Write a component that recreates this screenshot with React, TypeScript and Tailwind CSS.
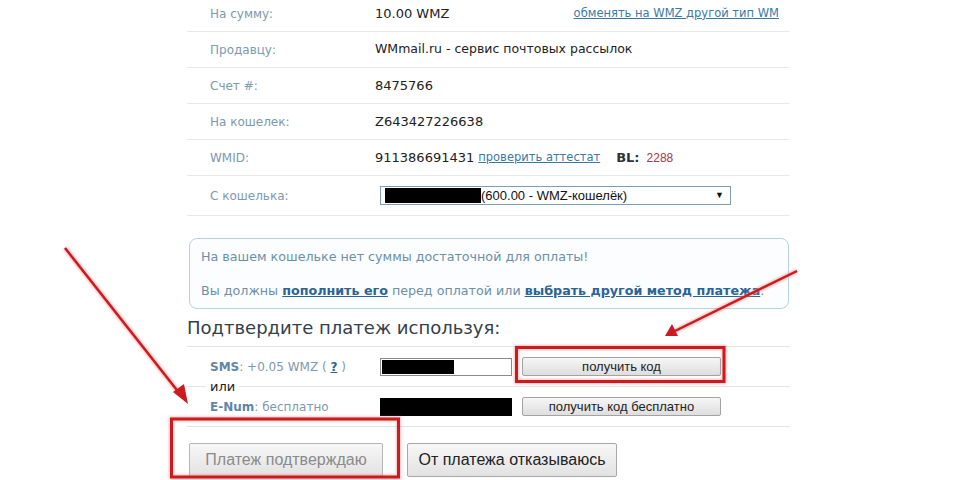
import React from 'react';

const Row = ({ label, children, tall }: { label: string; children: React.ReactNode; tall?: boolean }) => (
  <div className={`flex items-center border-b border-[#e8e8e8] ${tall ? 'h-[40px]' : 'h-[36px]'}`}>
    <div className="w-[188px] pl-[23px] text-[12px] text-[#7e98ae]">{label}</div>
    <div className="flex flex-1 items-center text-[#222]">{children}</div>
  </div>
);

const SmallButton = ({ children }: { children: React.ReactNode }) => (
  <button className="h-[19px] w-[199px] rounded-[2px] border border-[#a3a3a3] bg-gradient-to-b from-[#f6f6f6] to-[#dedede] font-['Liberation_Sans',Arial,sans-serif] text-[13px] leading-none text-[#222]">
    {children}
  </button>
);

export default function App() {
  return (
    <div className="relative h-[480px] w-[960px] overflow-hidden bg-white font-['DejaVu_Sans',Verdana,sans-serif] text-[13px]">
      <div className="ml-[187px] mt-[-4px] w-[603px]">
        <Row label="На сумму:">
          <span>10.00 WMZ</span>
          <a className="ml-auto mr-[11px] text-[11.5px] text-[#3a7aa8] underline">обменять на WMZ другой тип WM</a>
        </Row>
        <Row label="Продавцу:">
          <span className="text-[12.5px]">WMmail.ru - сервис почтовых рассылок</span>
        </Row>
        <Row label="Счет #:">8475766</Row>
        <Row label="На кошелек:">Z643427226638</Row>
        <Row label="WMID:">
          <span>911386691431</span>
          <a className="ml-[4px] text-[11.5px] text-[#3a7aa8] underline">проверить аттестат</a>
          <span className="ml-[16px] font-bold text-[#333]">BL:</span>
          <span className="ml-[7px] font-['Liberation_Sans',Arial,sans-serif] text-[12px] text-[#a3324c]">2288</span>
        </Row>
        <Row label="С кошелька:" tall>
          <div className="ml-[5px] flex h-[19px] w-[351px] items-center border border-[#7f9db9] bg-white pl-[4px] pr-[6px] font-['Liberation_Sans',Arial,sans-serif] text-[13px] text-[#111]">
            <span className="h-[15px] w-[96px] bg-black" />
            <span>(600.00 - WMZ-кошелёк)</span>
            <span className="ml-auto text-[9px]">▼</span>
          </div>
        </Row>
      </div>

      <div className="ml-[189px] mt-[22px] w-[600px] rounded-[8px] border border-[#b3d3e3] bg-[#fbfdfe] px-[11px] pt-[8px] text-[12.7px] text-[#6b8fa8]">
        <p className="leading-[20px]">На вашем кошельке нет суммы достаточной для оплаты!</p>
        <p className="mt-[14px] pb-[7px] leading-[20px]">
          Вы должны <a className="font-bold text-[#2a6496] underline">пополнить его</a> перед оплатой или{' '}
          <a className="font-bold text-[#2a6496] underline">выбрать другой метод платежа</a>.
        </p>
      </div>

      <div className="ml-[187px] w-[603px]">
        <h2 className="h-[37px] pt-[7px] text-[18px] leading-[24px] text-[#34404b]">Подтвердите платеж используя:</h2>
        <div className="relative border-t border-[#e3e3e3]">
          <div className="flex h-[40px] items-center border-b border-[#e3e3e3]">
            <div className="w-[193px] pl-[23px] text-[12px] text-[#7e98ae]">
              <span className="font-bold text-[#5f86a8]">SMS</span>: +0.05 WMZ ({' '}
              <span className="font-bold text-[#2a6496] underline">?</span> )
            </div>
            <div className="flex h-[18px] w-[132px] border border-[#8a8a8a] bg-white p-[1px]">
              <span className="h-full w-[72px] bg-black" />
            </div>
            <div className="ml-[10px]">
              <SmallButton>получить код</SmallButton>
            </div>
          </div>
          <span className="absolute left-[19px] top-[32px] bg-white px-[4px] leading-[16px] text-[#222]">или</span>
          <div className="flex h-[40px] items-center border-b border-[#e3e3e3]">
            <div className="w-[193px] pl-[23px] text-[12px] text-[#7e98ae]">
              <span className="font-bold text-[#5f86a8]">E-Num</span>: бесплатно
            </div>
            <div className="h-[18px] w-[132px] bg-black" />
            <div className="ml-[10px]">
              <SmallButton>получить код бесплатно</SmallButton>
            </div>
          </div>
        </div>
        <div className="ml-[2px] mt-[16px] flex gap-[24px] font-['Liberation_Sans',Arial,sans-serif] text-[16px]">
          <button className="h-[34px] w-[194px] rounded-[2px] border border-[#b5b5b5] bg-gradient-to-b from-[#f7f7f7] to-[#e2e2e2] text-[#8a8a8a]">
            Платеж подтверждаю
          </button>
          <button className="h-[34px] w-[210px] rounded-[2px] border border-[#a8a8a8] bg-gradient-to-b from-[#f7f7f7] to-[#e2e2e2] text-[#222]">
            От платежа отказываюсь
          </button>
        </div>
      </div>

      <svg className="pointer-events-none absolute inset-0" width="960" height="480" viewBox="0 0 960 480">
        <defs>
          <filter id="glow" x="-20%" y="-20%" width="140%" height="140%">
            <feGaussianBlur stdDeviation="1.2" />
          </filter>
        </defs>
        <g stroke="#f08080" strokeWidth="5" fill="none" opacity="0.5" filter="url(#glow)">
          <rect x="516.5" y="347.5" width="207.5" height="34" />
          <rect x="171.5" y="419" width="227" height="58" />
          <line x1="65" y1="248" x2="180" y2="394" />
          <line x1="797" y1="271" x2="675" y2="331" />
        </g>
        <g stroke="#cc1b1f" strokeWidth="3" fill="none">
          <rect x="516.5" y="347.5" width="207.5" height="34" />
          <rect x="171.5" y="419" width="227" height="58" />
          <line x1="65" y1="248" x2="180" y2="394" strokeWidth="2.5" />
          <line x1="797" y1="271" x2="675" y2="331" strokeWidth="2.5" />
        </g>
        <g fill="#cc1b1f">
          <polygon points="188,404 173,392 184,384" />
          <polygon points="665,336 672,324 678,336" />
        </g>
      </svg>
    </div>
  );
}
